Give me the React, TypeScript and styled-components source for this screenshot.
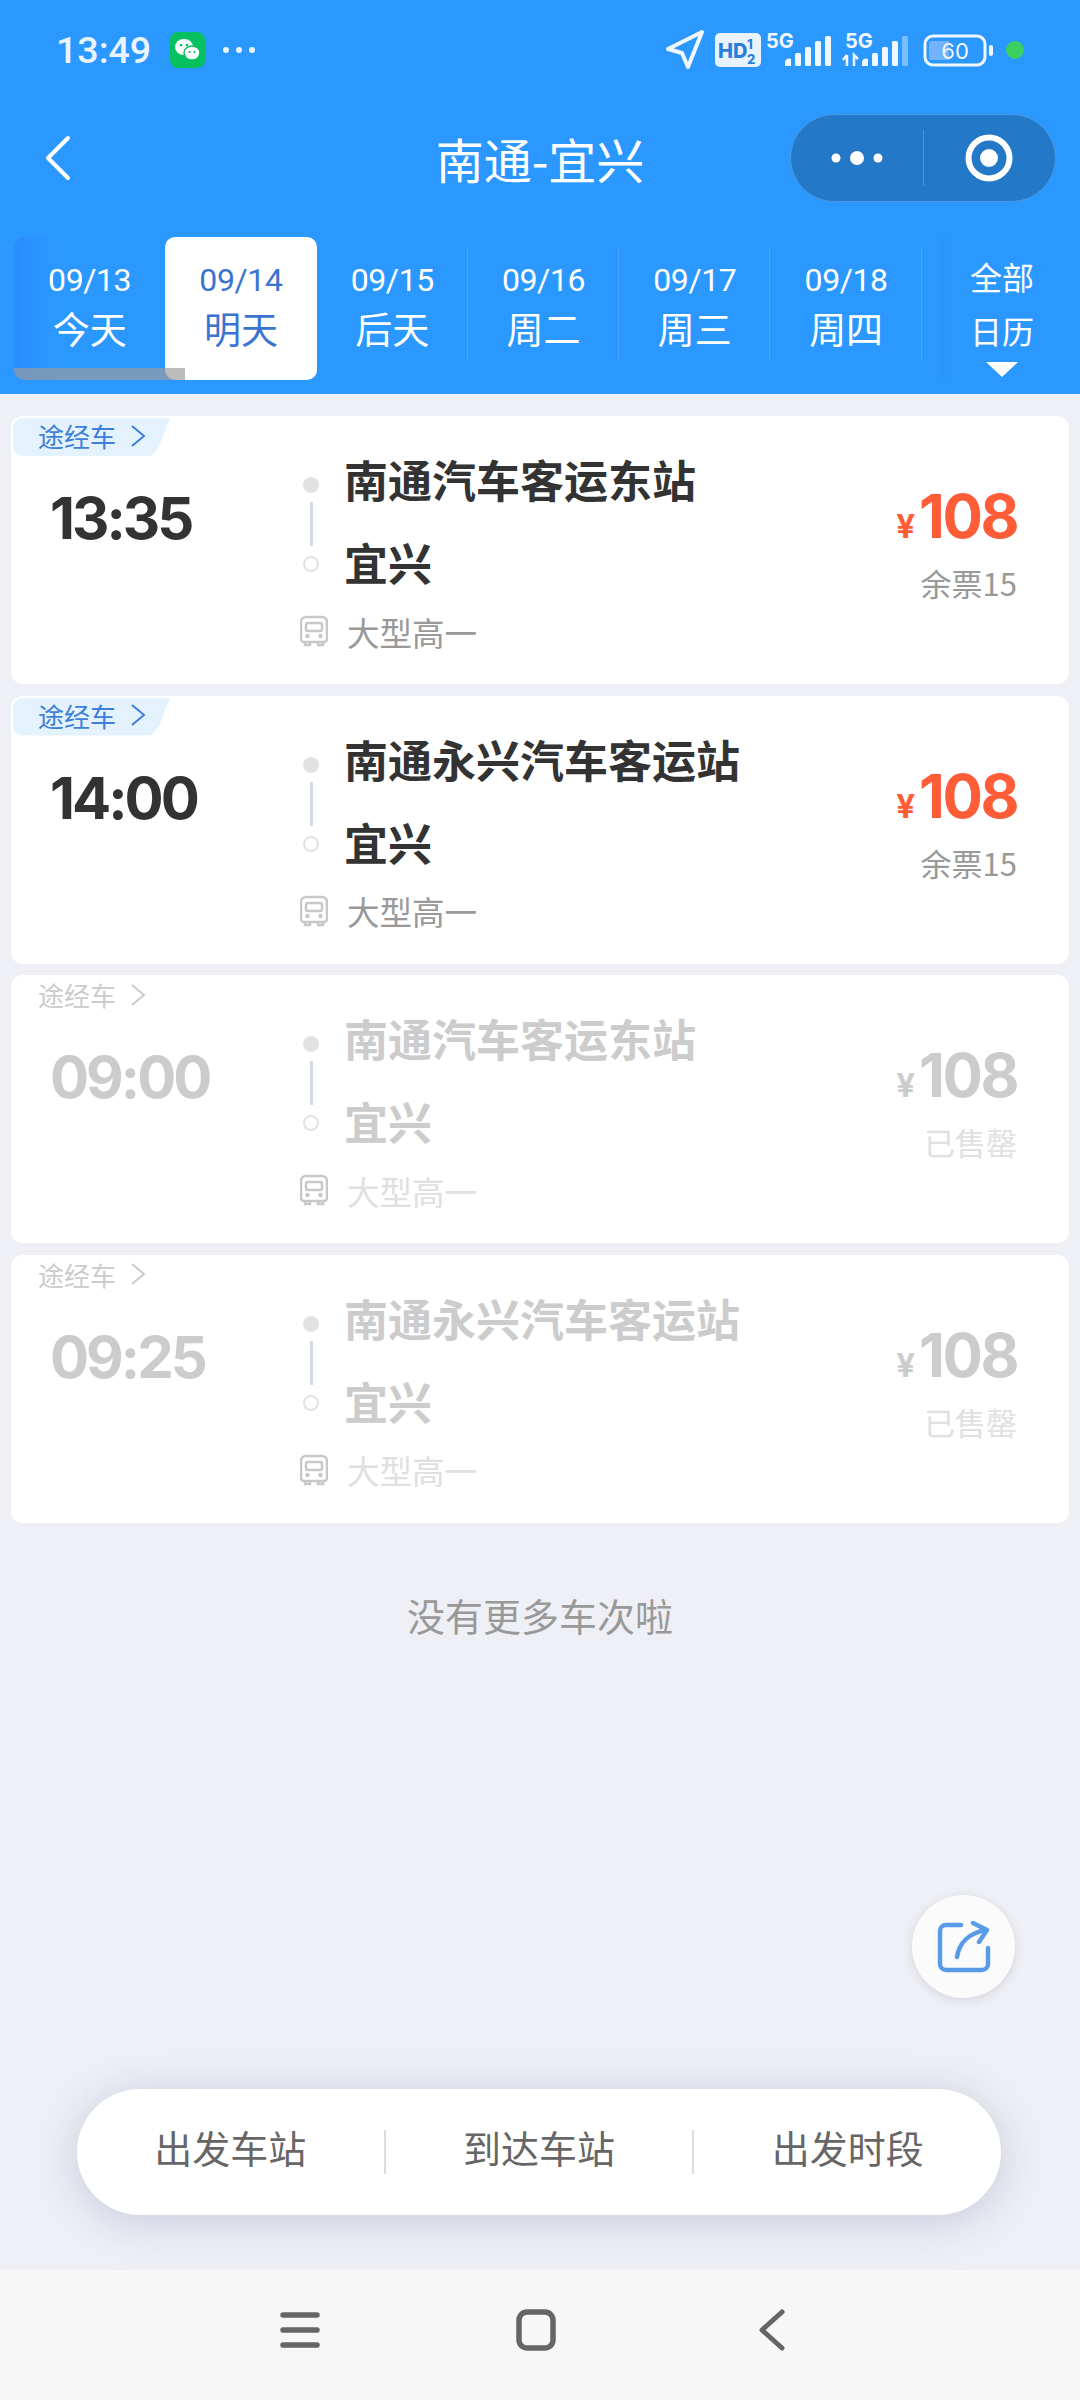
import React from "react";
import styled, { createGlobalStyle } from "styled-components";

const trips = [
  { time: "13:35", from: "南通汽车客运东站", left: "余票15", off: false },
  { time: "14:00", from: "南通永兴汽车客运站", left: "余票15", off: false },
  { time: "09:00", from: "南通汽车客运东站", left: "已售罄", off: true },
  { time: "09:25", from: "南通永兴汽车客运站", left: "已售罄", off: true },
];

const dates = [
  { date: "09/13", day: "今天" },
  { date: "09/14", day: "明天" },
  { date: "09/15", day: "后天" },
  { date: "09/16", day: "周二" },
  { date: "09/17", day: "周三" },
  { date: "09/18", day: "周四" },
];

const GlobalStyle = createGlobalStyle`
  html, body {
    margin: 0;
    padding: 0;
    background: #eff0f5;
  }
  * { box-sizing: border-box; }
  body {
    font-family: "Noto Sans CJK SC", "Noto Sans", sans-serif;
  }
`;

const Page = styled.div`
  width: 1080px;
  height: 2400px;
  display: flex;
  flex-direction: column;
  overflow: hidden;
`;

const Header = styled.header`
  background: #2b98ff;
  height: 394px;
  flex: none;
  color: #fff;
`;

const StatusBar = styled.div`
  height: 100px;
  display: flex;
  align-items: center;
  padding: 0 49px 0 56px;
`;

const Clock = styled.span`
  font-family: Roboto, sans-serif;
  font-size: 37.5px;
  font-weight: 500;
  color: #e9f4ff;
  width: 114px;
`;

const WeChat = styled.svg`
  width: 35px;
  height: 36px;
`;

const MoreDots = styled.svg`
  width: 34px;
  height: 8px;
  margin-left: 17px;
`;

const StatusIcons = styled.svg`
  margin-left: auto;
  width: 366px;
  height: 50px;
`;

const NavBar = styled.div`
  height: 116px;
  display: flex;
  align-items: center;
  position: relative;
  padding: 0 24px 0 45px;
`;

const BackIcon = styled.svg`
  width: 26px;
  height: 46px;
`;

const Title = styled.h1`
  position: absolute;
  left: 0;
  right: 0;
  text-align: center;
  margin: 0;
  font-size: 48px;
  font-weight: 400;
  line-height: 60px;
`;

const Capsule = styled.div`
  margin-left: auto;
  width: 266px;
  height: 88px;
  border-radius: 44px;
  background: #2478c8;
  border: 1px solid #4a98e0;
  display: flex;
  align-items: center;
`;

const CapsulePart = styled.div`
  flex: 1;
  height: 56px;
  display: flex;
  align-items: center;
  justify-content: center;
  & + & {
    border-left: 1px solid #4f95d6;
  }
`;

const DateStrip = styled.div`
  position: relative;
  margin: 21px 15px 0 14px;
  height: 143px;
  display: flex;
  border-radius: 10px;
  background: linear-gradient(90deg, #2a8cff 0, #2b98ff 42px);
`;

const DateCell = styled.div<{ $active?: boolean; $line?: boolean }>`
  position: relative;
  width: 151.3px;
  flex: none;
  display: flex;
  flex-direction: column;
  align-items: center;
  border-radius: 10px;
  background: ${(p) => (p.$active ? "#fff" : "transparent")};
  color: ${(p) => (p.$active ? "#3a74d0" : "#fff")};
  &::after {
    content: "";
    display: ${(p) => (p.$line ? "block" : "none")};
    position: absolute;
    right: 0;
    top: 11px;
    bottom: 20px;
    width: 1px;
    background: #4aa5fb;
  }
`;

const DateText = styled.span`
  font-family: Roboto, sans-serif;
  font-size: 32px;
  letter-spacing: -0.4px;
  line-height: 40px;
  margin-top: 23px;
`;

const DayText = styled.span`
  font-size: 37px;
  line-height: 50px;
  margin-top: 3px;
`;

const CalendarCell = styled.div`
  flex: 1;
  margin-left: 17px;
  display: flex;
  flex-direction: column;
  align-items: center;
  font-size: 32px;
  line-height: 40px;
  padding-top: 19px;
  background: linear-gradient(90deg, #2a95fc 0, #2b98ff 14px);
  span + span {
    margin-top: 14px;
  }
`;

const Triangle = styled.i`
  display: block;
  width: 0;
  height: 0;
  margin-top: 12px;
  border-left: 16px solid transparent;
  border-right: 16px solid transparent;
  border-top: 15px solid #fff;
`;

const ScrollThumb = styled.div`
  position: absolute;
  left: 0;
  bottom: 0;
  width: 171px;
  height: 12px;
  border-radius: 0 0 0 10px;
  background: rgba(156, 156, 156, 0.68);
`;

const Main = styled.main`
  position: relative;
  flex: 1;
  padding: 22px 11px 0;
  display: flex;
  flex-direction: column;
  gap: 11.5px;
`;

const Card = styled.article`
  position: relative;
  height: 268px;
  flex: none;
  background: #fff;
  border-radius: 12px;
  display: flex;
  padding: 22px 52px 0 39px;
`;

const Tag = styled.div<{ $off: boolean }>`
  position: absolute;
  left: 2px;
  top: 2px;
  width: 157px;
  height: 38px;
  padding: 0 0 3px 25px;
  display: flex;
  align-items: center;
  gap: 14px;
  font-size: 26px;
  border-radius: 10px 0 10px 10px;
  color: ${(p) => (p.$off ? "#ccc" : "#3f7fd6")};
  background: ${(p) => (p.$off ? "transparent" : "#e3f2fd")};
  clip-path: polygon(0 0, 100% 0, 93% 75%, 88% 100%, 0 100%);
`;

const Clocktime = styled.div<{ $off: boolean }>`
  width: 250px;
  flex: none;
  margin-top: 50px;
  font-family: Inter, sans-serif;
  font-weight: 700;
  font-size: 58px;
  letter-spacing: -3px;
  line-height: 60px;
  color: ${(p) => (p.$off ? "#ccc" : "#333")};
`;

const Route = styled.div`
  display: flex;
  flex-direction: column;
`;

const Stops = styled.div`
  display: flex;
`;

const Rail = styled.div`
  width: 22px;
  margin-right: 22px;
  padding-top: 39px;
  display: flex;
  flex-direction: column;
  align-items: center;
`;

const FromDot = styled.i`
  width: 16px;
  height: 16px;
  border-radius: 50%;
  background: #e2e2e2;
`;

const RailLine = styled.i`
  width: 3px;
  height: 44px;
  margin: 9px 0 10px;
  background: #d5dbe3;
`;

const ToDot = styled.i`
  width: 16px;
  height: 16px;
  border-radius: 50%;
  border: 2px solid #e2e2e2;
`;

const Names = styled.div<{ $off: boolean }>`
  font-size: 44px;
  font-weight: 700;
  line-height: 83px;
  color: ${(p) => (p.$off ? "#ccc" : "#333")};
`;

const BusRow = styled.div<{ $off: boolean }>`
  display: flex;
  align-items: center;
  height: 40px;
  margin-top: 7px;
  font-size: 32.5px;
  color: ${(p) => (p.$off ? "#e0e0e0" : "#999")};
`;

const BusIcon = styled.svg`
  width: 28px;
  height: 32px;
  margin-right: 19px;
`;

const PriceCol = styled.div`
  margin-left: auto;
  display: flex;
  flex-direction: column;
  align-items: flex-end;
`;

const Price = styled.div<{ $off: boolean }>`
  margin-top: 48px;
  display: flex;
  align-items: baseline;
  font-family: Inter, sans-serif;
  font-weight: 700;
  font-size: 60px;
  letter-spacing: -2.5px;
  line-height: 60px;
  color: ${(p) => (p.$off ? "#ccc" : "#ff5c38")};
`;

const Yen = styled.span`
  font-size: 33px;
  letter-spacing: 0;
  margin-right: 4px;
`;

const Left = styled.div<{ $off: boolean }>`
  margin-top: 7px;
  font-size: 31px;
  line-height: 40px;
  color: ${(p) => (p.$off ? "#e0e0e0" : "#999")};
`;

const NoMore = styled.div`
  margin-top: 56px;
  text-align: center;
  font-size: 38px;
  line-height: 50px;
  color: #999;
`;

const ShareButton = styled.div`
  position: absolute;
  left: 912px;
  top: 1501px;
  width: 103px;
  height: 103px;
  border-radius: 50%;
  background: #fbfbfc;
  box-shadow: 0 2px 10px rgba(130, 135, 150, 0.25);
  display: flex;
  align-items: center;
  justify-content: center;
`;

const FilterBar = styled.div`
  position: absolute;
  left: 77px;
  top: 1695px;
  width: 924px;
  height: 126px;
  border-radius: 63px;
  background: #fff;
  box-shadow: 0 6px 44px rgba(140, 150, 185, 0.42);
  display: flex;
  align-items: center;
`;

const FilterItem = styled.div`
  flex: 1;
  height: 44px;
  padding-bottom: 12px;
  display: flex;
  align-items: center;
  justify-content: center;
  font-size: 38px;
  color: #666;
  & + & {
    border-left: 2px solid #ddd;
  }
`;

const SystemNav = styled.nav`
  height: 130px;
  flex: none;
  background: #f7f7f7;
  display: flex;
  align-items: center;
  justify-content: center;
  padding: 0 9px 10px 0;
`;

const SystemIcon = styled.svg`
  width: 40px;
  height: 42px;
  margin: 0 98px;
`;

function Bars({ x, last }: { x: number; last?: boolean }) {
  return (
    <g fill="#f0f7ff">
      <path d="M0 31v-3a4 4 0 0 1 6-4v7z" transform={`translate(${x} 0)`} />
      <rect x={x + 10} y={18} width={6} height={13} rx={1.5} />
      <rect x={x + 20} y={12} width={6} height={19} rx={1.5} />
      <rect x={x + 30} y={6} width={6} height={25} rx={1.5} />
      <rect x={x + 40} y={1} width={6} height={30} rx={1.5} opacity={last ? 0.4 : 1} />
    </g>
  );
}

function Bus() {
  return (
    <BusIcon viewBox="0 0 28 32" fill="none" stroke="#c8c8c8" strokeWidth="2.5">
      <path d="M4 27h20a3 3 0 0 0 3-3V7a5 5 0 0 0-5-5H6a5 5 0 0 0-5 5v17a3 3 0 0 0 3 3z" />
      <rect x="6" y="8" width="16" height="8" rx="2" />
      <path d="M5 27v3h5v-3M18 27v3h5v-3" />
      <circle cx="7.5" cy="21" r="1" fill="#c8c8c8" />
      <circle cx="20.5" cy="21" r="1" fill="#c8c8c8" />
    </BusIcon>
  );
}

export default function App() {
  return (
    <Page>
      <GlobalStyle />
      <Header>
        <StatusBar>
          <Clock>13:49</Clock>
          <WeChat viewBox="0 0 35 36">
            <rect width="35" height="36" rx="8" fill="#07c160" />
            <ellipse cx="14" cy="15" rx="9" ry="8" fill="#fff" />
            <ellipse cx="22" cy="21" rx="8" ry="7" fill="#fff" stroke="#07c160" strokeWidth="1.5" />
            <circle cx="11" cy="13" r="1.3" fill="#07c160" />
            <circle cx="17" cy="13" r="1.3" fill="#07c160" />
            <circle cx="19.5" cy="20" r="1.1" fill="#07c160" />
            <circle cx="24.5" cy="20" r="1.1" fill="#07c160" />
          </WeChat>
          <MoreDots viewBox="0 0 34 8" fill="#e9f4ff">
            <circle cx="4" cy="4" r="3" />
            <circle cx="17" cy="4" r="3" />
            <circle cx="30" cy="4" r="3" />
          </MoreDots>
          <StatusIcons viewBox="0 0 366 50">
            <path d="M37 7 3 24l14 4 6 14z" fill="none" stroke="#f0f7ff" strokeWidth="4" strokeLinejoin="round" />
            <rect x="50" y="8" width="46" height="34" rx="5" fill="#e8f3ff" />
            <text x="53" y="33" fontFamily="Inter" fontWeight="800" fontSize="20" fill="#2b7fd8">HD</text>
            <text x="82" y="24" fontFamily="Inter" fontWeight="800" fontSize="13" fill="#2b7fd8">1</text>
            <text x="82" y="39" fontFamily="Inter" fontWeight="800" fontSize="13" fill="#2b7fd8">2</text>
            <text x="101" y="23" fontFamily="Inter" fontWeight="700" fontSize="20" fill="#f0f7ff">5G</text>
            <g transform="translate(120 10)">
              <Bars x={0} />
            </g>
            <text x="180" y="23" fontFamily="Inter" fontWeight="700" fontSize="20" fill="#f0f7ff">5G</text>
            <path d="M182 30v11M178 35l4-5M189 41V30l4 4" fill="none" stroke="#f0f7ff" strokeWidth="2.5" />
            <g transform="translate(197 10)">
              <Bars x={0} last />
            </g>
            <rect x="260" y="11" width="60" height="29" rx="8" fill="none" stroke="#f0f7ff" strokeWidth="3" />
            <path d="M266 16h18v19h-18a2 2 0 0 1-2-2V18a2 2 0 0 1 2-2z" fill="#72b3fb" />
            <text x="290" y="34" textAnchor="middle" fontFamily="Inter" fontSize="22" fill="#f0f7ff">60</text>
            <rect x="324" y="20" width="4" height="11" rx="2" fill="#f0f7ff" />
            <circle cx="350" cy="25" r="9" fill="#3ad061" />
          </StatusIcons>
        </StatusBar>
        <NavBar>
          <BackIcon viewBox="0 0 26 46" fill="none" stroke="#fff" strokeWidth="4" strokeLinecap="round" strokeLinejoin="round">
            <path d="M23 3 3 23l20 20" />
          </BackIcon>
          <Title>南通-宜兴</Title>
          <Capsule>
            <CapsulePart>
              <svg width="54" height="16" viewBox="0 0 54 16" fill="#fff">
                <circle cx="6" cy="8" r="4.5" />
                <circle cx="27" cy="8" r="7" />
                <circle cx="48" cy="8" r="4.5" />
              </svg>
            </CapsulePart>
            <CapsulePart>
              <svg width="50" height="50" viewBox="0 0 50 50">
                <circle cx="25" cy="25" r="20.5" fill="none" stroke="#fff" strokeWidth="6" />
                <circle cx="25" cy="25" r="9" fill="#fff" />
              </svg>
            </CapsulePart>
          </Capsule>
        </NavBar>
        <DateStrip>
          {dates.map((d, i) => (
            <DateCell key={d.date} $active={i === 1} $line={i >= 2}>
              <DateText>{d.date}</DateText>
              <DayText>{d.day}</DayText>
            </DateCell>
          ))}
          <CalendarCell>
            <span>全部</span>
            <span>日历</span>
            <Triangle />
          </CalendarCell>
          <ScrollThumb />
        </DateStrip>
      </Header>
      <Main>
        {trips.map((t) => (
          <Card key={t.time}>
            <Tag $off={t.off}>
              途经车
              <svg width="16" height="24" viewBox="0 0 16 24" fill="none" stroke="currentColor" strokeWidth="2">
                <path d="m2 2 12 10-12 10" />
              </svg>
            </Tag>
            <Clocktime $off={t.off}>{t.time}</Clocktime>
            <Route>
              <Stops>
                <Rail>
                  <FromDot />
                  <RailLine />
                  <ToDot />
                </Rail>
                <Names $off={t.off}>
                  <div>{t.from}</div>
                  <div>宜兴</div>
                </Names>
              </Stops>
              <BusRow $off={t.off}>
                <Bus />
                大型高一
              </BusRow>
            </Route>
            <PriceCol>
              <Price $off={t.off}>
                <Yen>¥</Yen>108
              </Price>
              <Left $off={t.off}>{t.left}</Left>
            </PriceCol>
          </Card>
        ))}
        <NoMore>没有更多车次啦</NoMore>
        <ShareButton>
          <svg width="54" height="52" viewBox="0 0 54 52" fill="none" stroke="#5a9be8" strokeWidth="4.5" strokeLinecap="round" strokeLinejoin="round">
            <path d="M24 4H9a6 6 0 0 0-6 6v33a6 6 0 0 0 6 6h36a6 6 0 0 0 6-6V27" />
            <path d="M20 36c2-14 12-24 29-27" />
            <path d="M36 2l14 7-8 12" />
          </svg>
        </ShareButton>
        <FilterBar>
          <FilterItem>出发车站</FilterItem>
          <FilterItem>到达车站</FilterItem>
          <FilterItem>出发时段</FilterItem>
        </FilterBar>
      </Main>
      <SystemNav>
        <SystemIcon viewBox="0 0 40 42" fill="none" stroke="#666" strokeWidth="5.5" strokeLinecap="round">
          <path d="M3 6h34M3 21h34M3 36h34" />
        </SystemIcon>
        <SystemIcon viewBox="0 0 40 42" fill="none" stroke="#666" strokeWidth="5.5">
          <rect x="3" y="3" width="34" height="36" rx="8" />
        </SystemIcon>
        <SystemIcon viewBox="0 0 40 42" fill="none" stroke="#666" strokeWidth="5" strokeLinecap="round" strokeLinejoin="round">
          <path d="M30 3 10 21l20 18" />
        </SystemIcon>
      </SystemNav>
    </Page>
  );
}
